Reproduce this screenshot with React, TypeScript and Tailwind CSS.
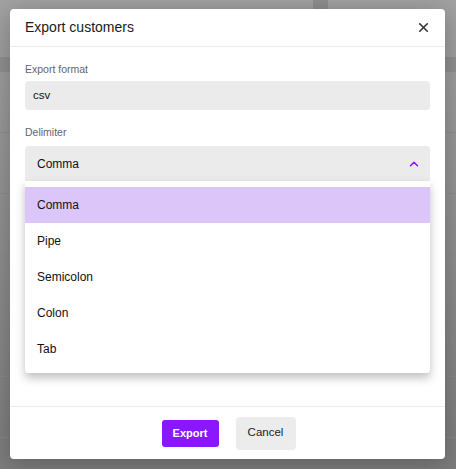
import { ChevronUp, X } from "lucide-react";

const delimiters = ["Comma", "Pipe", "Semicolon", "Colon", "Tab"];

export default function App() {
  return (
    <div className="relative h-[469px] w-[456px] overflow-hidden bg-gradient-to-b from-[#a2a2a2] to-[#7c7c7c] font-['Liberation_Sans',Arial,sans-serif]">
      {/* faded page behind the overlay */}
      <div className="flex h-[57px]">
        <div className="w-[313px]" />
        <div className="w-[15px] bg-[#8e8e8e]" />
      </div>
      <div className="h-[15px] bg-[#8f8f8f]" />
      {[0, 1, 2, 3, 4, 5].map((i) => (
        <div key={i} className="h-[61px] border-b border-[#8a8a8a]/70" />
      ))}

      <div className="absolute left-[10px] top-[9px] flex h-[450px] w-[435px] flex-col rounded-[4px] bg-white shadow-[0_4px_24px_rgba(0,0,0,0.25)]">
        <div className="flex h-[38px] items-center justify-between border-b border-[#ececec] pl-[15px] pr-[14px]">
          <h2 className="text-[14px] text-[#1a1a1a]">Export customers</h2>
          <X className="h-[15px] w-[15px] text-[#333]" strokeWidth={2.6} />
        </div>

        <div className="flex-1 px-[15px] pt-[15px]">
          <label className="block text-[10.5px] leading-[14px] text-[#666]">Export format</label>
          <div className="mt-[5px] flex h-[29px] items-center rounded-[4px] bg-[#ebebeb] px-[8px] text-[11.5px] text-[#111]">
            csv
          </div>

          <label className="mt-[15px] block text-[10.5px] leading-[14px] text-[#666]">Delimiter</label>
          <div className="relative mt-[7px]">
            <div className="flex h-[35px] items-center justify-between rounded-t-[4px] bg-[#ebebeb] pl-[12px] pr-[9px] text-[12px] text-[#111]">
              <span>Comma</span>
              <ChevronUp className="h-[14px] w-[14px] text-[#8a17ff]" strokeWidth={2.6} />
            </div>
            <ul className="absolute left-0 right-0 top-full z-10 rounded-b-[3px] bg-white py-[6px] shadow-[0_5px_10px_rgba(0,0,0,0.25)]">
              {delimiters.map((d, i) => (
                <li
                  key={d}
                  className={`flex h-[36px] items-center pl-[12px] text-[12px] text-[#111] ${
                    i === 0 ? "bg-[#dcc6f9]" : ""
                  }`}
                >
                  {d}
                </li>
              ))}
            </ul>
          </div>
        </div>

        <div className="flex h-[53px] items-center justify-center gap-[17px] border-t border-[#ececec] pl-[2px]">
          <button className="h-[27px] w-[57px] rounded-[3px] bg-[#8a17ff] text-[11px] font-bold text-white">
            Export
          </button>
          <button className="h-[33px] w-[60px] rounded-[4px] bg-[#ececec] text-[11.5px] text-[#222]">
            Cancel
          </button>
        </div>
      </div>
    </div>
  );
}
